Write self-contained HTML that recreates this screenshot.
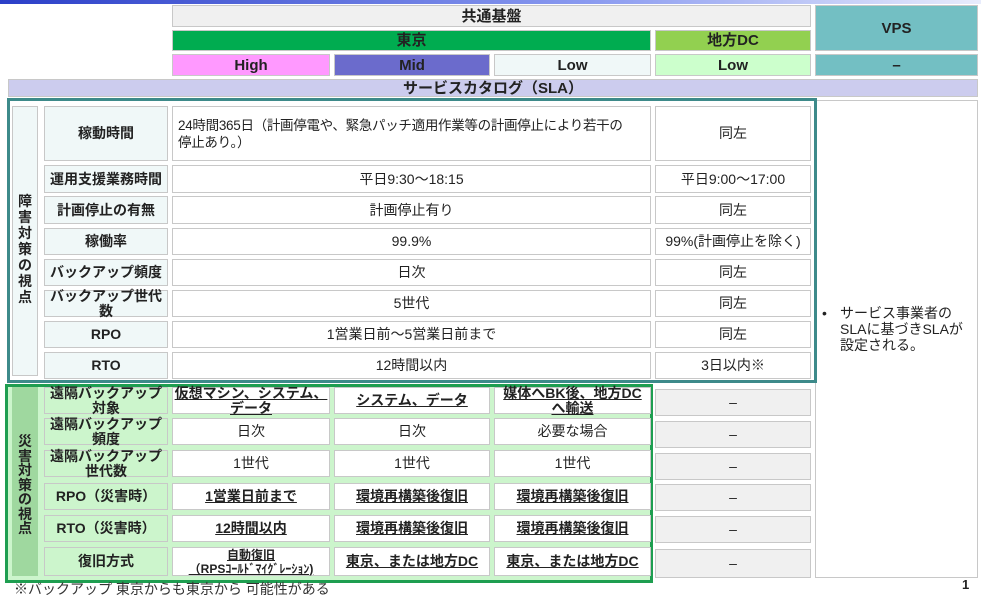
<!DOCTYPE html>
<html><head><meta charset="utf-8"><style>
*{margin:0;padding:0;box-sizing:border-box}
body{width:981px;height:587px;overflow:hidden;background:#fff;position:relative;font-family:"Liberation Sans","Noto Sans CJK JP",sans-serif;color:#222;font-size:14px}
.c{position:absolute;display:flex;align-items:center;justify-content:center;text-align:center;border:1px solid #c8c8c8;line-height:15px}
.b{font-weight:bold;font-size:15px}
.w{background:#fff}
.l{background:#f0f8f8;font-weight:bold}
.g{background:#ccf5cc;font-weight:bold}
.v{background:#f0f0f0}
.u{text-decoration:underline;font-weight:bold}
.box{position:absolute}
</style></head><body>
<div class="box" style="left:0;top:0;width:981px;height:4px;background:linear-gradient(90deg,#2b3fc8,#8a9af0 60%,#e8ecfc)"></div>
<div class="c b" style="left:172px;top:5px;width:639px;height:22px;background:#f0f0f0">共通基盤</div>
<div class="c b" style="left:815px;top:5px;width:163px;height:46px;background:#73bfc3">VPS</div>
<div class="c b" style="left:172px;top:30px;width:479px;height:21px;background:#00ac50">東京</div>
<div class="c b" style="left:655px;top:30px;width:156px;height:21px;background:#92d050">地方DC</div>
<div class="c b" style="left:172px;top:54px;width:158px;height:22px;background:#ff99ff">High</div>
<div class="c b" style="left:334px;top:54px;width:156px;height:22px;background:#6b6bcc">Mid</div>
<div class="c b" style="left:494px;top:54px;width:157px;height:22px;background:#f0f8f8">Low</div>
<div class="c b" style="left:655px;top:54px;width:156px;height:22px;background:#ccffcc">Low</div>
<div class="c b" style="left:815px;top:54px;width:163px;height:22px;background:#73bfc3">–</div>
<div class="c b" style="left:8px;top:79px;width:970px;height:18px;background:#ccccee">サービスカタログ（SLA）</div>

<div class="c w" style="left:815px;top:100px;width:163px;height:478px;justify-content:flex-start;text-align:left;padding-left:6px">
<div style="display:flex;margin-top:-20px;line-height:16px"><span style="width:18px">•</span><span>サービス事業者の<br>SLAに基づきSLAが<br>設定される。</span></div></div>

<div class="box" style="left:7px;top:98px;width:810px;height:285px;border:3px solid #3d8a8a;background:#fff"></div>
<div class="c l" style="left:12px;top:106px;width:26px;height:270px;line-height:16px;align-items:flex-start;padding-top:86px">障<br>害<br>対<br>策<br>の<br>視<br>点</div>

<div class="c l" style="left:44px;top:106px;width:124px;height:55px">稼動時間</div>
<div class="c w" style="left:172px;top:106px;width:479px;height:55px;justify-content:flex-start;text-align:left;padding-left:5px;line-height:17px;font-size:13.5px;white-space:nowrap;letter-spacing:-0.3px">24時間365日（計画停電や、緊急パッチ適用作業等の計画停止により若干の<br>停止あり。）</div>
<div class="c w" style="left:655px;top:106px;width:156px;height:55px">同左</div>

<div class="c l" style="left:44px;top:165px;width:124px;height:28px">運用支援業務時間</div>
<div class="c w" style="left:172px;top:165px;width:479px;height:28px">平日9:30～18:15</div>
<div class="c w" style="left:655px;top:165px;width:156px;height:28px">平日9:00～17:00</div>

<div class="c l" style="left:44px;top:196px;width:124px;height:28px">計画停止の有無</div>
<div class="c w" style="left:172px;top:196px;width:479px;height:28px">計画停止有り</div>
<div class="c w" style="left:655px;top:196px;width:156px;height:28px">同左</div>

<div class="c l" style="left:44px;top:228px;width:124px;height:27px">稼働率</div>
<div class="c w" style="left:172px;top:228px;width:479px;height:27px">99.9%</div>
<div class="c w" style="left:655px;top:228px;width:156px;height:27px">99%(計画停止を除く)</div>

<div class="c l" style="left:44px;top:259px;width:124px;height:27px">バックアップ頻度</div>
<div class="c w" style="left:172px;top:259px;width:479px;height:27px">日次</div>
<div class="c w" style="left:655px;top:259px;width:156px;height:27px">同左</div>

<div class="c l" style="left:44px;top:290px;width:124px;height:27px">バックアップ世代<br>数</div>
<div class="c w" style="left:172px;top:290px;width:479px;height:27px">5世代</div>
<div class="c w" style="left:655px;top:290px;width:156px;height:27px">同左</div>

<div class="c l" style="left:44px;top:321px;width:124px;height:27px">RPO</div>
<div class="c w" style="left:172px;top:321px;width:479px;height:27px">1営業日前～5営業日前まで</div>
<div class="c w" style="left:655px;top:321px;width:156px;height:27px">同左</div>

<div class="c l" style="left:44px;top:352px;width:124px;height:27px">RTO</div>
<div class="c w" style="left:172px;top:352px;width:479px;height:27px">12時間以内</div>
<div class="c w" style="left:655px;top:352px;width:156px;height:27px">3日以内※</div>

<div class="box" style="left:5px;top:384px;width:648px;height:199px;border:3px solid #1e9e50;background:#ccf5cc"></div>
<div class="c g" style="left:12px;top:387px;width:26px;height:189px;line-height:14.5px;align-items:flex-start;padding-top:46px;background:#9fd89f;border-color:#9fd89f">災<br>害<br>対<br>策<br>の<br>視<br>点</div>

<div class="c g" style="left:44px;top:387px;width:124px;height:27px">遠隔バックアップ<br>対象</div>
<div class="c w u" style="left:172px;top:387px;width:158px;height:27px">仮想マシン、システム、<br>データ</div>
<div class="c w u" style="left:334px;top:387px;width:156px;height:27px">システム、データ</div>
<div class="c w u" style="left:494px;top:387px;width:157px;height:27px">媒体へBK後、地方DC<br>へ輸送</div>
<div class="c v" style="left:655px;top:389px;width:156px;height:27px">–</div>

<div class="c g" style="left:44px;top:418px;width:124px;height:27px">遠隔バックアップ<br>頻度</div>
<div class="c w" style="left:172px;top:418px;width:158px;height:27px">日次</div>
<div class="c w" style="left:334px;top:418px;width:156px;height:27px">日次</div>
<div class="c w" style="left:494px;top:418px;width:157px;height:27px">必要な場合</div>
<div class="c v" style="left:655px;top:421px;width:156px;height:27px">–</div>

<div class="c g" style="left:44px;top:450px;width:124px;height:27px">遠隔バックアップ<br>世代数</div>
<div class="c w" style="left:172px;top:450px;width:158px;height:27px">1世代</div>
<div class="c w" style="left:334px;top:450px;width:156px;height:27px">1世代</div>
<div class="c w" style="left:494px;top:450px;width:157px;height:27px">1世代</div>
<div class="c v" style="left:655px;top:453px;width:156px;height:27px">–</div>

<div class="c g" style="left:44px;top:483px;width:124px;height:27px">RPO（災害時）</div>
<div class="c w u" style="left:172px;top:483px;width:158px;height:27px">1営業日前まで</div>
<div class="c w u" style="left:334px;top:483px;width:156px;height:27px">環境再構築後復旧</div>
<div class="c w u" style="left:494px;top:483px;width:157px;height:27px">環境再構築後復旧</div>
<div class="c v" style="left:655px;top:484px;width:156px;height:27px">–</div>

<div class="c g" style="left:44px;top:515px;width:124px;height:27px">RTO（災害時）</div>
<div class="c w u" style="left:172px;top:515px;width:158px;height:27px">12時間以内</div>
<div class="c w u" style="left:334px;top:515px;width:156px;height:27px">環境再構築後復旧</div>
<div class="c w u" style="left:494px;top:515px;width:157px;height:27px">環境再構築後復旧</div>
<div class="c v" style="left:655px;top:516px;width:156px;height:27px">–</div>

<div class="c g" style="left:44px;top:547px;width:124px;height:29px">復旧方式</div>
<div class="c w u" style="left:172px;top:547px;width:158px;height:29px;font-size:12px;line-height:14px">自動復旧<br>（RPSｺｰﾙﾄﾞﾏｲｸﾞﾚｰｼｮﾝ)</div>
<div class="c w u" style="left:334px;top:547px;width:156px;height:29px">東京、または地方DC</div>
<div class="c w u" style="left:494px;top:547px;width:157px;height:29px">東京、または地方DC</div>
<div class="c v" style="left:655px;top:549px;width:156px;height:29px">–</div>

<div class="box" style="left:14px;top:582px;font-size:14px;line-height:14px;color:#333">※バックアップ 東京からも東京から 可能性がある</div>
<div class="box" style="left:962px;top:577px;font-weight:bold;font-size:13px">1</div>
</body></html>
